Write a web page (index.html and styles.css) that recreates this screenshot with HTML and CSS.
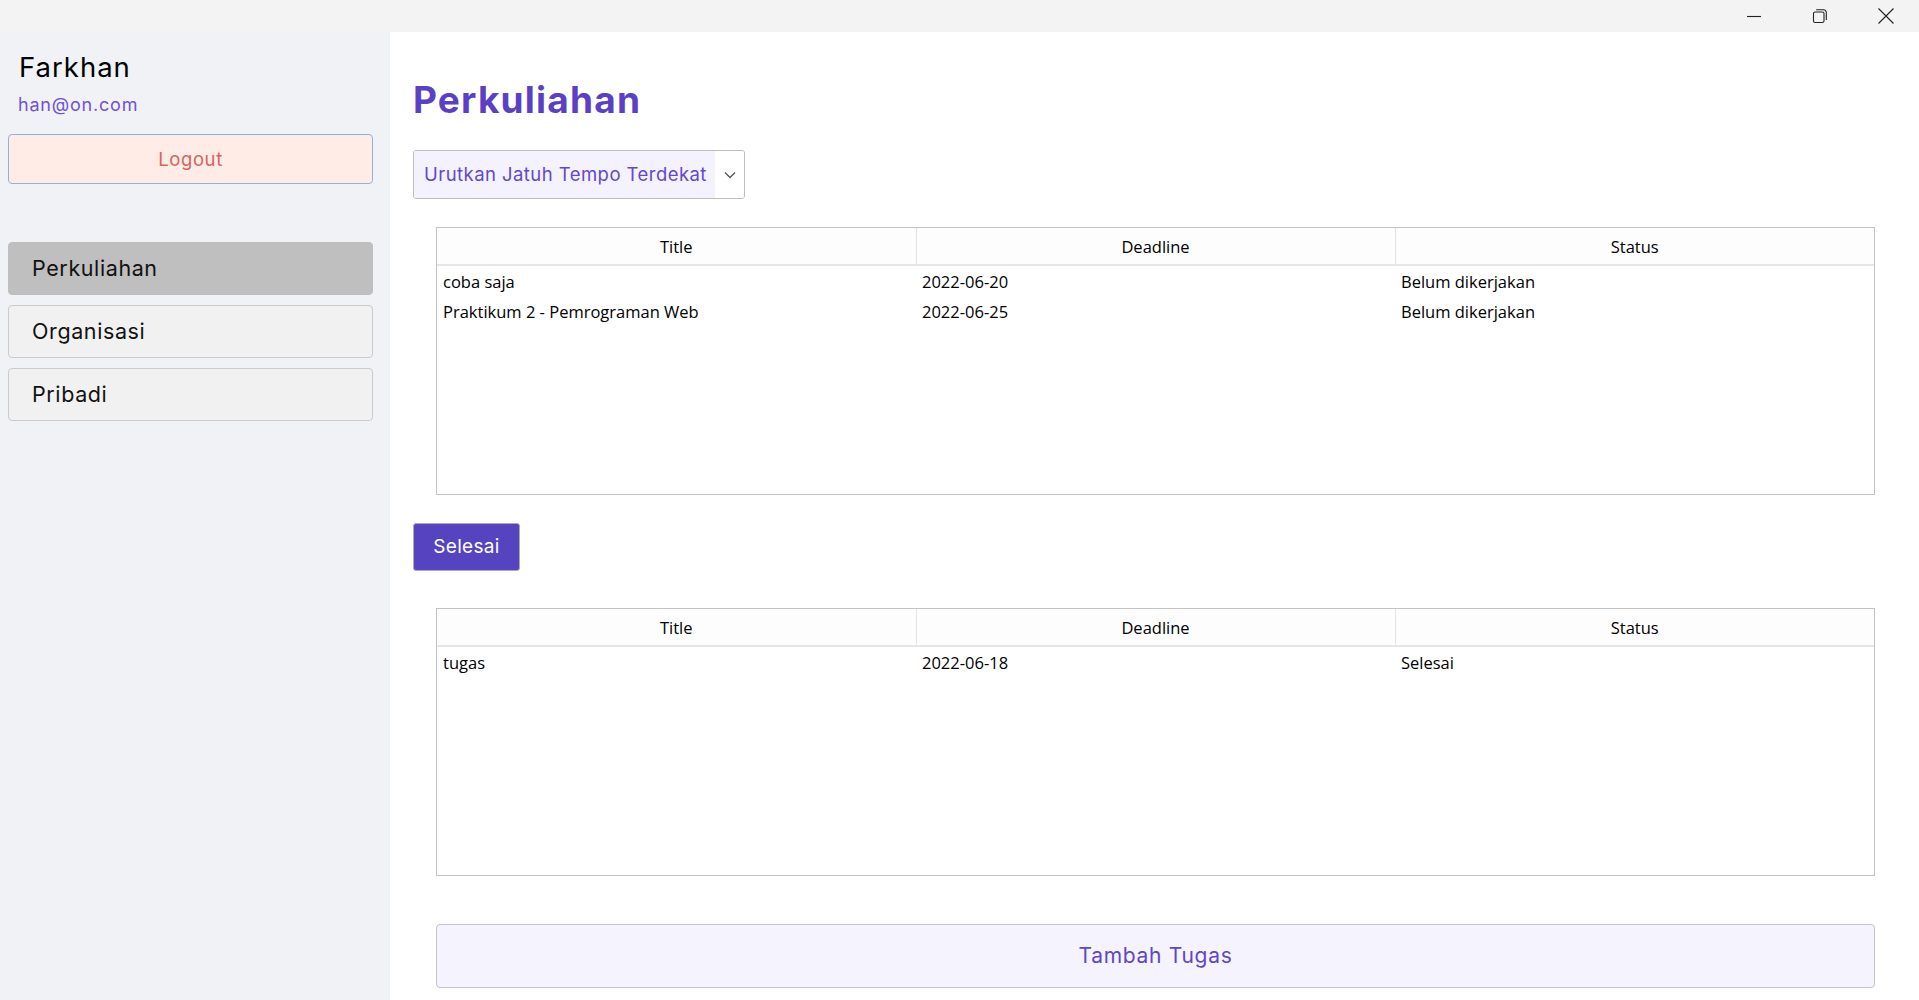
FILE: index.html
```html
<!DOCTYPE html>
<html lang="id">
<head>
<meta charset="utf-8">
<title>Perkuliahan</title>
<link rel="stylesheet" href="styles.css">
</head>
<body>
<div class="titlebar">
  <div class="winbtn" aria-label="minimize">
    <svg width="16" height="16" viewBox="0 0 16 16"><path d="M1 8.5h14" stroke="#222" stroke-width="1.1" fill="none"/></svg>
  </div>
  <div class="winbtn" aria-label="restore">
    <svg width="16" height="16" viewBox="0 0 16 16"><rect x="1.5" y="4" width="10.5" height="10.5" rx="1.6" stroke="#222" stroke-width="1.1" fill="none"/><path d="M4.2 1.8h7.6a2.5 2.5 0 0 1 2.5 2.5v7.6" stroke="#222" stroke-width="1.1" fill="none"/></svg>
  </div>
  <div class="winbtn" aria-label="close">
    <svg width="18" height="18" viewBox="0 0 18 18"><path d="M1.5 1.5l15 15M16.5 1.5l-15 15" stroke="#222" stroke-width="1.1" fill="none"/></svg>
  </div>
</div>
<div class="app">
  <aside class="sidebar">
    <div class="user-name">Farkhan</div>
    <div class="user-email">han@on.com</div>
    <button class="logout">Logout</button>
    <nav class="nav">
      <button class="nav-item active">Perkuliahan</button>
      <button class="nav-item">Organisasi</button>
      <button class="nav-item">Pribadi</button>
    </nav>
  </aside>
  <main class="main">
    <h1 class="page-title">Perkuliahan</h1>
    <div class="select">
      <span class="select-text">Urutkan Jatuh Tempo Terdekat</span>
      <span class="select-arrow">
        <svg width="14" height="14" viewBox="0 0 14 14"><path d="M2 4.5l5 5 5-5" stroke="#555" stroke-width="1.3" fill="none"/></svg>
      </span>
    </div>
    <div class="grid-box">
      <table class="grid">
        <thead>
          <tr><th>Title</th><th>Deadline</th><th>Status</th></tr>
        </thead>
        <tbody>
          <tr><td>coba saja</td><td>2022-06-20</td><td>Belum dikerjakan</td></tr>
          <tr><td>Praktikum 2 - Pemrograman Web</td><td>2022-06-25</td><td>Belum dikerjakan</td></tr>
        </tbody>
      </table>
    </div>
    <button class="done-btn">Selesai</button>
    <div class="grid-box second">
      <table class="grid">
        <thead>
          <tr><th>Title</th><th>Deadline</th><th>Status</th></tr>
        </thead>
        <tbody>
          <tr><td>tugas</td><td>2022-06-18</td><td>Selesai</td></tr>
        </tbody>
      </table>
    </div>
    <button class="add-btn">Tambah Tugas</button>
  </main>
</div>
</body>
</html>
```
FILE: styles.css
```css
* { box-sizing: border-box; }
html, body { margin: 0; padding: 0; }
body {
  width: 1919px;
  height: 1000px;
  overflow: hidden;
  background: #ffffff;
  font-family: Inter, "Noto Sans", sans-serif;
  color: #111;
}
button { font-family: inherit; cursor: pointer; }

.titlebar {
  height: 32px;
  background: #f3f3f3;
  display: flex;
  justify-content: flex-end;
}
.winbtn {
  width: 66px;
  height: 32px;
  display: flex;
  align-items: center;
  justify-content: center;
}

.app {
  display: flex;
  height: 968px;
}

.sidebar {
  width: 390px;
  flex: none;
  background: #f1f2f6;
  padding: 19px 17px 0 8px;
  display: flex;
  flex-direction: column;
}
.user-name {
  font-size: 27.5px;
  line-height: 32px;
  margin-left: 11px;
  color: #000;
  letter-spacing: 1px;
}
.user-email {
  font-size: 18px;
  line-height: 24px;
  margin-top: 10px;
  margin-left: 10px;
  color: #6f52d6;
  letter-spacing: 0.8px;
}
.logout {
  margin-top: 17px;
  height: 50px;
  background: #ffece6;
  border: 1.5px solid #8fb1dc;
  border-radius: 4px;
  color: #d4665f;
  font-size: 18.5px;
  letter-spacing: 0.6px;
  padding-bottom: 2px;
}
.nav {
  margin-top: 58px;
  display: flex;
  flex-direction: column;
  gap: 10px;
}
.nav-item {
  height: 53px;
  text-align: left;
  padding: 0 0 2px 23px;
  background: #f1f1f1;
  border: 1.5px solid #cbcbcb;
  border-radius: 4px;
  font-size: 21.5px;
  color: #111;
  letter-spacing: 0.6px;
}
.nav-item.active {
  background: #bfbfbf;
  border-color: #bfbfbf;
}

.main {
  flex: 1;
  padding: 0 44px 0 23px;
  display: flex;
  flex-direction: column;
  align-items: flex-start;
}
.page-title {
  margin: 46px 0 0 0;
  font-size: 37px;
  line-height: 44px;
  font-weight: 700;
  color: #5b3fc4;
  letter-spacing: 1.2px;
}
.select {
  margin-top: 28px;
  width: 332px;
  height: 49px;
  border: 1.5px solid #bdbdbd;
  border-radius: 3px;
  display: flex;
  overflow: hidden;
}
.select-text {
  flex: 1;
  background: #f4f2fe;
  color: #6348cc;
  font-size: 18.5px;
  display: flex;
  align-items: center;
  padding-left: 10px;
  padding-bottom: 2px;
  letter-spacing: 0.45px;
}
.select-arrow {
  width: 29px;
  background: #fff;
  display: flex;
  align-items: center;
  justify-content: center;
}

.grid-box {
  margin-top: 28px;
  margin-left: 23px;
  align-self: stretch;
  height: 268px;
  border: 1.5px solid #c3c3c3;
  background: #fff;
}
.grid-box.second { margin-top: 37px; }
.grid {
  width: 100%;
  border-collapse: collapse;
  table-layout: fixed;
  font-family: "Open Sans", "Noto Sans", sans-serif;
  font-size: 16.5px;
  color: #000;
}
.grid th {
  height: 37px;
  font-weight: 400;
  background: #fdfdfd;
  border-bottom: 2px solid #e6e6e6;
  border-left: 1px solid #e6e6e6;
  text-align: center;
  padding: 0;
}
.grid th:first-child { border-left: none; }
.grid td {
  height: 31px;
  padding: 0 6px;
  text-align: left;
  white-space: nowrap;
}
.grid tbody tr:first-child td { padding-top: 0; }

.done-btn {
  margin-top: 28px;
  width: 107px;
  height: 48px;
  background: #5543c0;
  border: 1.5px solid #a9a9b5;
  border-radius: 3px;
  color: #fff;
  font-size: 19px;
  letter-spacing: 0.3px;
  padding-bottom: 2px;
}

.add-btn {
  margin-top: 48px;
  margin-left: 23px;
  align-self: stretch;
  height: 64px;
  background: #f5f3fe;
  border: 1.5px solid #c4c4c4;
  border-radius: 4px;
  color: #6045c9;
  font-size: 21px;
  letter-spacing: 0.7px;
  padding-bottom: 2px;
}
```
